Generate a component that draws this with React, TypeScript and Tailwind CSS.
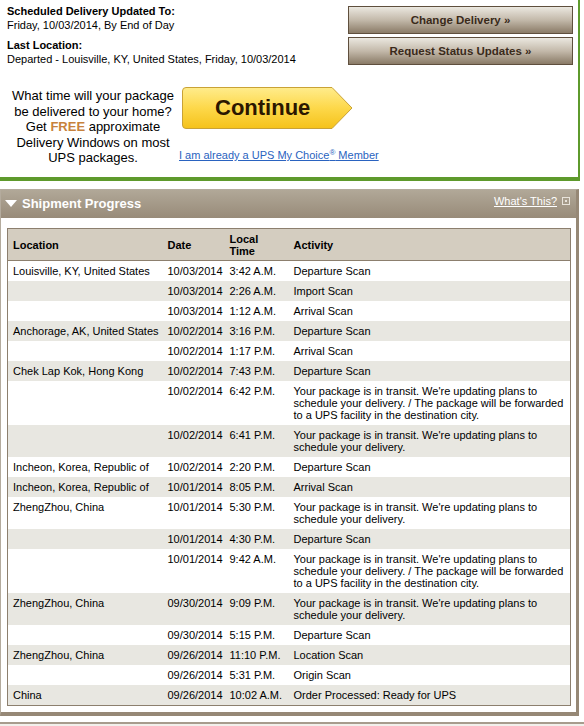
import React from "react";

type Row = { loc?: string; date: string; time: string; activity: string };

const transitLong =
  "Your package is in transit. We're updating plans to schedule your delivery. / The package will be forwarded to a UPS facility in the destination city.";
const transitShort =
  "Your package is in transit. We're updating plans to schedule your delivery.";

const rows: Row[] = [
  { loc: "Louisville, KY, United States", date: "10/03/2014", time: "3:42 A.M.", activity: "Departure Scan" },
  { date: "10/03/2014", time: "2:26 A.M.", activity: "Import Scan" },
  { date: "10/03/2014", time: "1:12 A.M.", activity: "Arrival Scan" },
  { loc: "Anchorage, AK, United States", date: "10/02/2014", time: "3:16 P.M.", activity: "Departure Scan" },
  { date: "10/02/2014", time: "1:17 P.M.", activity: "Arrival Scan" },
  { loc: "Chek Lap Kok, Hong Kong", date: "10/02/2014", time: "7:43 P.M.", activity: "Departure Scan" },
  { date: "10/02/2014", time: "6:42 P.M.", activity: transitLong },
  { date: "10/02/2014", time: "6:41 P.M.", activity: transitShort },
  { loc: "Incheon, Korea, Republic of", date: "10/02/2014", time: "2:20 P.M.", activity: "Departure Scan" },
  { loc: "Incheon, Korea, Republic of", date: "10/01/2014", time: "8:05 P.M.", activity: "Arrival Scan" },
  { loc: "ZhengZhou, China", date: "10/01/2014", time: "5:30 P.M.", activity: transitShort },
  { date: "10/01/2014", time: "4:30 P.M.", activity: "Departure Scan" },
  { date: "10/01/2014", time: "9:42 A.M.", activity: transitLong },
  { loc: "ZhengZhou, China", date: "09/30/2014", time: "9:09 P.M.", activity: transitShort },
  { date: "09/30/2014", time: "5:15 P.M.", activity: "Departure Scan" },
  { loc: "ZhengZhou, China", date: "09/26/2014", time: "11:10 P.M.", activity: "Location Scan" },
  { date: "09/26/2014", time: "5:31 P.M.", activity: "Origin Scan" },
  { loc: "China", date: "09/26/2014", time: "10:02 A.M.", activity: "Order Processed: Ready for UPS" },
];

function BrownButton({ label }: { label: string }) {
  return (
    <button className="w-[225px] h-[28px] border border-[#5f4f3d] bg-gradient-to-b from-[#ebe8e0] via-[#c3b9aa] to-[#8a7b67] text-[11.5px] font-bold text-[#3a2a1a]">
      {label} »
    </button>
  );
}

function ContinueButton() {
  return (
    <div className="relative w-[171px] h-[42px]">
      <svg width="171" height="42" viewBox="0 0 171 42" className="absolute inset-0">
        <defs>
          <linearGradient id="cg" x1="0" y1="0" x2="0" y2="1">
            <stop offset="0" stopColor="#ffec8c" />
            <stop offset="0.5" stopColor="#fdd84a" />
            <stop offset="1" stopColor="#f5c21a" />
          </linearGradient>
        </defs>
        <path
          d="M4 0.5 H150 L170 21 L150 41.5 H4 Q0.5 41.5 0.5 38 V4 Q0.5 0.5 4 0.5 Z"
          fill="url(#cg)"
          stroke="#c9a236"
        />
      </svg>
      <div className="absolute inset-0 flex items-center pl-[33px] text-[22px] font-bold text-[#2b1700]">
        Continue
      </div>
    </div>
  );
}

export default function App() {
  return (
    <div className="w-[584px] bg-white text-[11px] leading-[14px] text-black font-['Liberation_Sans',Arial,sans-serif]">
      {/* top delivery box */}
      <div className="w-[580px] h-[181px] border-r-2 border-b-4 border-[#5e9a2c]">
        <div className="flex justify-between">
          <div className="pl-[7px] pt-[4px]">
            <div className="font-bold">Scheduled Delivery Updated To:</div>
            <div>Friday, 10/03/2014, By End of Day</div>
            <div className="font-bold mt-[6px]">Last Location:</div>
            <div>Departed - Louisville, KY, United States, Friday, 10/03/2014</div>
          </div>
          <div className="flex flex-col gap-[3px] pt-[6px] pr-[5px]">
            <BrownButton label="Change Delivery" />
            <BrownButton label="Request Status Updates" />
          </div>
        </div>
        <div className="flex mt-[21px]">
          <div className="w-[180px] pl-[6px] pt-[1px] text-center text-[13px] leading-[15.5px]">
            What time will your package be delivered to your home? Get{" "}
            <span className="font-bold text-[#c7823c]">FREE</span> approximate Delivery Windows on most UPS packages.
          </div>
          <div className="pl-[2px]">
            <ContinueButton />
            <a href="#" className="block mt-[19px] -ml-[3px] text-[11px] text-[#2a63c0] underline">
              I am already a UPS My Choice<sup className="text-[8px]">®</sup> Member
            </a>
          </div>
        </div>
      </div>

      {/* shipment progress panel */}
      <div className="mt-[8px] w-[579px] border-t border-l border-[#b4ab9d] border-r-[3px] border-r-[#968876] border-b-4 border-b-[#968876]">
        <div className="h-[28px] flex items-center justify-between bg-gradient-to-b from-[#b1a898] to-[#988b79]">
          <div className="flex items-center pl-[4px]">
            <svg width="12" height="8" viewBox="0 0 12 8" className="mr-[5px]">
              <path d="M0 0 H12 L6 7 Z" fill="#ffffff" />
            </svg>
            <span className="text-white font-bold text-[13px]">Shipment Progress</span>
          </div>
          <div className="flex items-center gap-[5px] pr-[6px] pb-[6px]">
            <a href="#" className="text-white underline text-[11px]">What's This?</a>
            <span className="w-[8px] h-[8px] border border-[#e8e3da] flex items-center justify-center">
              <span className="w-[2px] h-[2px] bg-[#e8e3da]" />
            </span>
          </div>
        </div>
        <div className="pl-[6px] pr-[4px] pt-[10px] pb-[6px]">
          <table className="w-[564px] table-fixed border border-[#8c7f6e] border-collapse leading-[12px]">
            <colgroup>
              <col className="w-[155px]" />
              <col className="w-[62px]" />
              <col className="w-[64px]" />
              <col />
            </colgroup>
            <thead>
              <tr className="bg-[#d4cdc0] border-b border-[#8c7f6e] h-[32px]">
                <th className="text-left font-bold pl-[5px] py-[2px]">Location</th>
                <th className="text-left font-bold pl-[5px]">Date</th>
                <th className="text-left font-bold pl-[5px]">
                  Local
                  <br />
                  Time
                </th>
                <th className="text-left font-bold pl-[5px]">Activity</th>
              </tr>
            </thead>
            <tbody>
              {rows.map((r, i) => (
                <tr key={i} className={i % 2 === 1 ? "bg-[#e8e7e1]" : "bg-white"}>
                  <td className="align-top pl-[5px] py-[4px] whitespace-nowrap">{r.loc ?? ""}</td>
                  <td className="align-top pl-[5px] py-[4px]">{r.date}</td>
                  <td className="align-top pl-[5px] py-[4px]">{r.time}</td>
                  <td className="align-top pl-[5px] pr-[4px] py-[4px]">{r.activity}</td>
                </tr>
              ))}
            </tbody>
          </table>
        </div>
      </div>
      <div className="mt-[6px] h-[8px] border-t-2 border-[#a79c8d] bg-[#f2f0ec]" />
    </div>
  );
}
